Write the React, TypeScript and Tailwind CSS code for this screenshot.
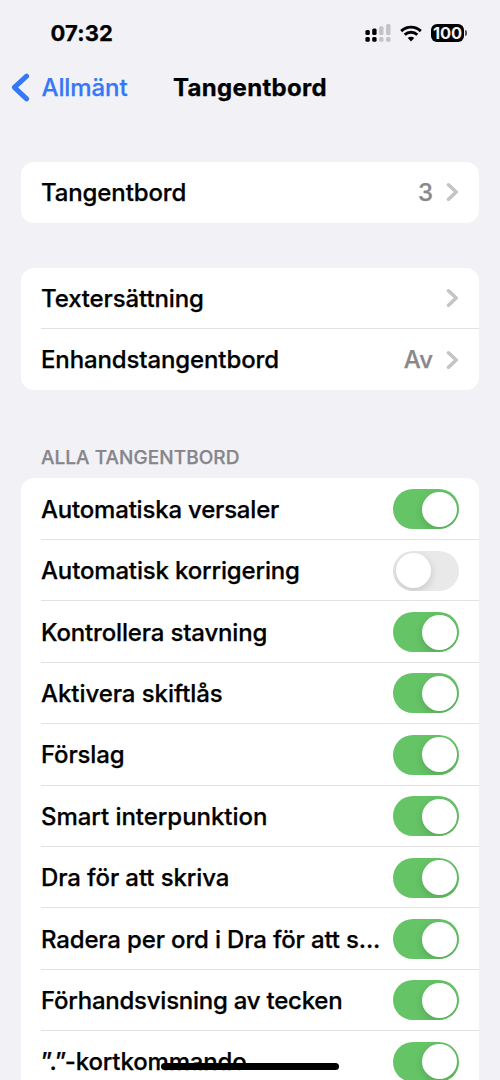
import { useState } from 'react';

type Ajuste = {
  label: string;
  on: boolean;
  tracking?: string;
};

const AJUSTES: Ajuste[] = [
  { label: 'Automatiska versaler', on: true, tracking: 'tracking-[-0.2px]' },
  { label: 'Automatisk korrigering', on: false },
  { label: 'Kontrollera stavning', on: true },
  { label: 'Aktivera skiftlås', on: true, tracking: 'tracking-[-0.06px]' },
  { label: 'Förslag', on: true },
  { label: 'Smart interpunktion', on: true, tracking: 'tracking-[-0.04px]' },
  { label: 'Dra för att skriva', on: true, tracking: 'tracking-[-0.1px]' },
  { label: 'Radera per ord i Dra för att s...', on: true },
  { label: 'Förhandsvisning av tecken', on: true, tracking: 'tracking-[-0.24px]' },
  { label: '”.”-kortkommando', on: true, tracking: 'tracking-[-0.14px]' },
];

function Chevron() {
  return (
    <svg
      className="ml-[13px] shrink-0"
      width="13"
      height="20"
      viewBox="0 0 13 20"
      fill="none"
      stroke="#c4c4c6"
      strokeWidth="3.6"
      strokeLinecap="round"
      strokeLinejoin="round"
    >
      <path d="M2.5 2.8 10.2 10 2.5 17.2" />
    </svg>
  );
}

function StatusBar() {
  return (
    <div className="flex h-[66px] items-center justify-between pr-[33px] pl-[50.5px]">
      <span className="text-[22px] font-bold tracking-[0.15px]">07:32</span>
      <div className="flex items-center">
        <svg width="26" height="18" viewBox="0 0 26 18">
          <g fill="#000">
            <rect x="0.4" y="6" width="4.4" height="5" rx="1.5" />
            <rect x="7.2" y="4.4" width="4.4" height="6.6" rx="1.5" />
            <rect x="0.4" y="13" width="4.4" height="4.8" rx="1.5" />
            <rect x="7.2" y="13" width="4.4" height="4.8" rx="1.5" />
          </g>
          <g fill="#c3c3c7">
            <rect x="14.1" y="2.2" width="4.4" height="8.8" rx="1.5" />
            <rect x="21.1" y="0" width="4.4" height="11" rx="1.5" />
            <rect x="14.1" y="13" width="4.4" height="4.8" rx="1.5" />
            <rect x="21.1" y="13" width="4.4" height="4.8" rx="1.5" />
          </g>
        </svg>
        <svg className="ml-[9px]" width="22" height="17" viewBox="0 0 22 17">
          <g fill="none" stroke="#000" strokeWidth="2.9">
            <path d="M1.2 6.1a14 14 0 0 1 19.6 0" />
            <path d="M4.7 9.8a9 9 0 0 1 12.6 0" />
          </g>
          <path d="M11 16.4 7.8 13.1a4.6 4.6 0 0 1 6.4 0Z" />
        </svg>
        <div className="ml-[9px] flex h-[18px] w-[33px] items-center justify-center rounded-[6px] bg-black pt-px text-[16.5px] leading-[17px] font-bold tracking-[-0.2px] text-[#f2f1f6] [-webkit-text-stroke:0px]">
          100
        </div>
        <div className="ml-px h-[6px] w-[2px] rounded-r-full bg-[#55555a]" />
      </div>
    </div>
  );
}

function Fila({ label, valor }: { label: string; valor?: string }) {
  return (
    <div className="flex h-[61px] items-center pr-[20px]">
      <span className="flex-1 pt-px tracking-[-0.12px]">{label}</span>
      {valor && <span className="pt-px tracking-normal text-[#88888b]">{valor}</span>}
      <Chevron />
    </div>
  );
}

function Toggle({ on, onClick, label }: { on: boolean; onClick: () => void; label: string }) {
  return (
    <button
      role="switch"
      aria-checked={on}
      aria-label={label}
      onClick={onClick}
      className={`flex h-[40px] w-[66px] shrink-0 items-center overflow-hidden rounded-full px-[2.5px] ${
        on ? 'justify-end bg-[#65c466]' : 'justify-start bg-[#e9e9ea]'
      }`}
    >
      <span className="size-[35px] rounded-full bg-white shadow-[0_3px_8px_rgba(0,0,0,0.15)]" />
    </button>
  );
}

export default function App() {
  const [ajustes, setAjustes] = useState(AJUSTES);

  const toggle = (i: number) => {
    setAjustes(ajustes.map((a, n) => (n === i ? { ...a, on: !a.on } : a)));
  };

  return (
    <main className="relative h-[1080px] w-[500px] overflow-hidden bg-[#f2f1f6] font-['Inter',sans-serif] text-[24px] font-medium tracking-[-0.16px] text-black [-webkit-text-stroke:0.25px]">
      <StatusBar />

      <header className="grid h-[44px] grid-cols-[1fr_auto_1fr] items-center px-[11px]">
        <button className="flex items-center tracking-[-0.1px] text-[#3478f6]">
          <svg
            width="19"
            height="30"
            viewBox="0 0 19 30"
            fill="none"
            stroke="currentColor"
            strokeWidth="5"
            strokeLinecap="round"
            strokeLinejoin="round"
          >
            <path d="M15.6 3.2 3.4 14.4l12.2 11.4" />
          </svg>
          <span className="ml-[11.5px]">Allmänt</span>
        </button>
        <h1 className="font-bold tracking-[0.3px]">Tangentbord</h1>
      </header>

      <div className="px-[21px] pt-[51.5px]">
        <section className="rounded-[13px] bg-white pl-[20px]">
          <Fila label="Tangentbord" valor="3" />
        </section>

        <section className="mt-[45px] rounded-[13px] bg-white pl-[20px]">
          <Fila label="Textersättning" />
          <div className="-mt-px border-t border-[#e2e2e4] pt-[0.5px]">
            <Fila label="Enhandstangentbord" valor="Av" />
          </div>
        </section>

        <h2 className="mt-[55.5px] pl-[20px] text-[19px] leading-[24px] tracking-[0.05px] text-[#85858a]">
          ALLA TANGENTBORD
        </h2>

        <section className="mt-[8px] rounded-t-[13px] bg-white pt-[1.1px] pl-[20px]">
          {ajustes.map((a, i) => (
            <div
              key={a.label}
              className="flex h-[61.4px] items-center justify-between border-b border-[#e2e2e4] pt-px pr-[20px]"
            >
              <span className={`pt-[1.2px] whitespace-nowrap ${a.tracking ?? ''}`}>{a.label}</span>
              <Toggle on={a.on} onClick={() => toggle(i)} label={a.label} />
            </div>
          ))}
        </section>
      </div>

      <div className="absolute bottom-[10px] left-[161px] h-[7px] w-[178px] rounded-full bg-black" />
    </main>
  );
}
